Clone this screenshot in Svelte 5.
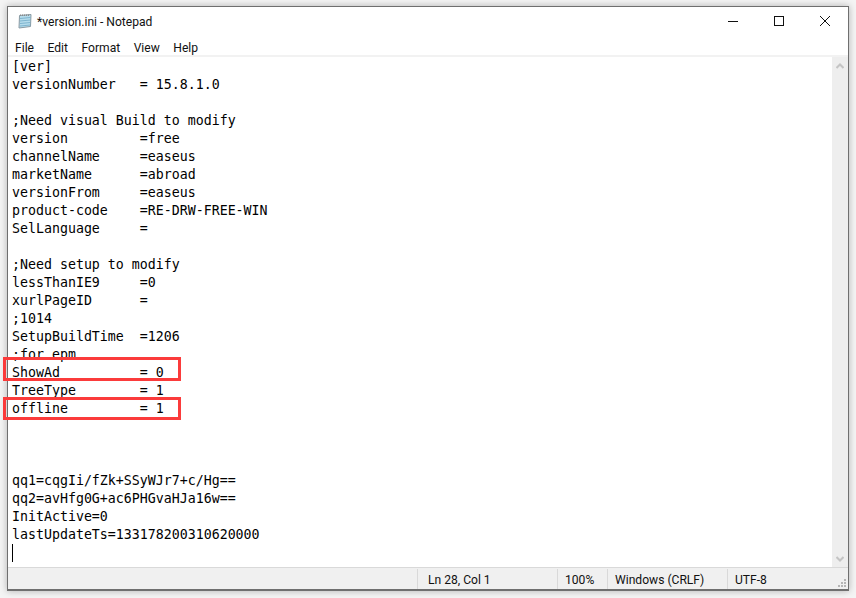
<script>
  const lines = [
    '[ver]','versionNumber   = 15.8.1.0','',';Need visual Build to modify',
    'version         =free','channelName     =easeus','marketName      =abroad','versionFrom     =easeus',
    'product-code    =RE-DRW-FREE-WIN','SelLanguage     =','',';Need setup to modify',
    'lessThanIE9     =0','xurlPageID      =',';1014','SetupBuildTime  =1206',';for epm',
    'ShowAd          = 0','TreeType        = 1','offline         = 1','','','',
    'qq1=cqgIi/fZk+SSyWJr7+c/Hg==','qq2=avHfg0G+ac6PHGvaHJa16w==','InitActive=0','lastUpdateTs=133178200310620000'
  ];
  const menus = ['File','Edit','Format','View','Help'];
</script>

<div class="page">
  <div class="window">
    <div class="titlebar">
      <svg class="appicon" width="16" height="16" viewBox="0 0 16 16">
        <path d="M2.5 2.5 L14 1.5 L13.5 13.5 L2 15 Z" fill="#b5dcec" stroke="#8a9aa3"/>
        <path d="M3 5.5L13.5 4.5M3 8L13.5 7M3 10.5L13.5 9.5M3 13L13.5 12" stroke="#6fa9c6" stroke-width="0.8"/>
        <path d="M3 2.2h10" stroke="#8a8a8a" stroke-width="1.4" stroke-dasharray="1 1"/>
      </svg>
      <span class="title">*version.ini - Notepad</span>
      <div class="controls">
        <svg width="10" height="10" viewBox="0 0 10 10"><path d="M0 5.5H10" stroke="#111" fill="none"/></svg>
        <svg width="10" height="10" viewBox="0 0 10 10"><rect x="0.5" y="0.5" width="9" height="9" stroke="#111" fill="none"/></svg>
        <svg width="10" height="10" viewBox="0 0 10 10"><path d="M0 0L10 10M10 0L0 10" stroke="#111" fill="none"/></svg>
      </div>
    </div>
    <div class="menubar">
      {#each menus as m}<span>{m}</span>{/each}
    </div>
    <div class="body">
      <div class="editor">
        {#each lines as line}<div class="line">{line}</div>{/each}
        <div class="line"><span class="caret"></span></div>
        <div class="mark mark1"></div>
        <div class="mark mark2"></div>
      </div>
      <div class="scrollbar">
        <svg width="8" height="6" viewBox="0 0 8 6"><path d="M0.5 5L4 1.5L7.5 5" stroke="#c4c4c4" stroke-width="2" fill="none"/></svg>
        <svg width="8" height="6" viewBox="0 0 8 6"><path d="M0.5 1L4 4.5L7.5 1" stroke="#c4c4c4" stroke-width="2" fill="none"/></svg>
      </div>
    </div>
    <div class="status">
      <div class="cell fill"></div>
      <div class="cell pos">Ln 28, Col 1</div>
      <div class="cell zoom">100%</div>
      <div class="cell eol">Windows (CRLF)</div>
      <div class="cell enc">UTF-8</div>
      <svg class="grip" width="10" height="10" viewBox="0 0 10 10" fill="#b5b5b5">
        <rect x="7" y="1" width="2" height="2"/><rect x="4" y="4" width="2" height="2"/><rect x="7" y="4" width="2" height="2"/>
        <rect x="1" y="7" width="2" height="2"/><rect x="4" y="7" width="2" height="2"/><rect x="7" y="7" width="2" height="2"/>
      </svg>
    </div>
  </div>
</div>

<style>
  :global(body) { margin: 0; background: #fff; }
  .page {
    width: 856px; height: 598px; box-sizing: border-box;
    padding: 6px 7px 7px 7px; background: #f4f4f4;
    font-family: Roboto, "Noto Sans", sans-serif;
  }
  .window {
    height: 100%; box-sizing: border-box; background: #fff;
    border: 1px solid #6f6f6f; border-width: 1px 1px 2px 1px;
    box-shadow: 0 0 7px rgba(0,0,0,.28);
    display: flex; flex-direction: column;
  }
  .titlebar { height: 29px; flex: none; display: flex; align-items: center; padding-left: 9px; }
  .appicon { margin-right: 4px; margin-top: -1px; }
  .title { font-size: 12.1px; color: #111; margin-top: 1px; }
  .controls { margin-left: auto; display: flex; gap: 36px; padding-right: 18px; margin-top: -1px; }
  .controls svg { display: block; }
  .menubar { height: 19px; flex: none; display: flex; gap: 13.5px; padding: 5px 0 0 7px; font-size: 12.1px; color: #111; align-items: center; box-sizing: border-box; }
  .body { flex: 1; min-height: 0; display: flex; border-top: 2px solid #f2f2f2; border-bottom: 1px solid #d9d9d9; }
  .editor {
    flex: 1; position: relative; padding: 1px 0 0 4px;
    font-family: "DejaVu Sans Mono", monospace; font-size: 13.28px; color: #000;
  }
  .line { height: 18px; line-height: 18px; white-space: pre; }
  .caret { display: inline-block; width: 1px; height: 18px; background: #000; vertical-align: top; }
  .mark { position: absolute; left: -5px; width: 172px; border: 3px solid #fb3b3b; }
  .mark1 { top: 300px; height: 18px; }
  .mark2 { top: 340px; height: 17px; }
  .scrollbar { width: 16px; flex: none; background: #eeeeee; display: flex; flex-direction: column; justify-content: space-between; align-items: center; padding: 6px 0 5px; box-sizing: border-box; }
  .scrollbar svg { display: block; }
  .status { height: 21px; flex: none; display: flex; background: #f0f0f0; font-size: 12.1px; color: #111; position: relative; align-items: stretch; }
  .cell { display: flex; align-items: center; box-sizing: border-box; border-left: 1px solid #d9d9d9; padding-left: 10px; padding-top: 2px; margin: 1px 0 0; }
  .fill { width: 409px; border-left: none; }
  .pos { width: 140px; }
  .zoom { width: 50px; padding-left: 7px; }
  .eol { width: 120px; padding-left: 7px; }
  .enc { flex: 1; padding-left: 7px; }
  .grip { position: absolute; right: 1px; bottom: 1px; }
</style>
